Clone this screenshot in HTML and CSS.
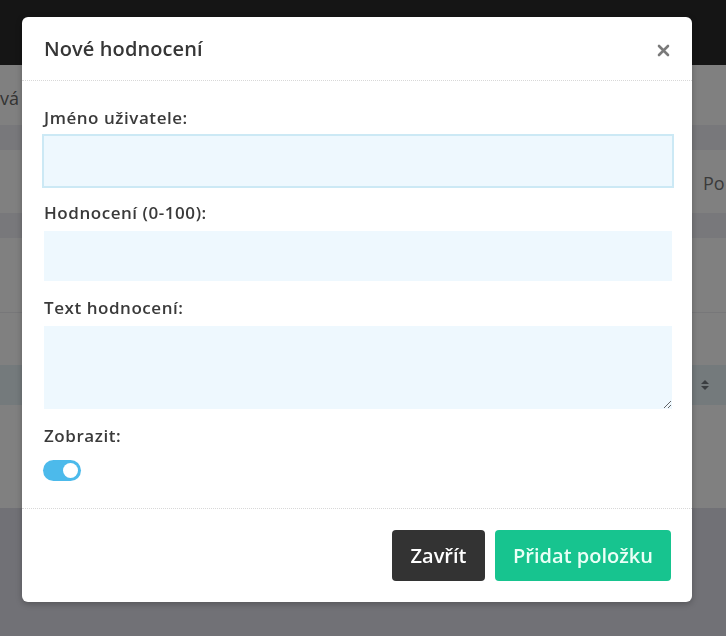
FILE: index.html
```html
<!DOCTYPE html>
<html lang="cs">
<head>
  <meta charset="UTF-8" />
  <meta name="viewport" content="width=device-width, initial-scale=1.0"/>
  <title>Nové hodnocení</title>
  <link rel="stylesheet" href="styles.css">
</head>
<body>

  <div class="page">
    <div class="topbar"></div>
    <div class="row row-title"><span class="left-text">vá</span></div>
    <div class="row band"></div>
    <div class="row row-tall"><span class="right-text">Po</span></div>
    <div class="row band"></div>
    <div class="row row-mid"></div>
    <div class="row row-mid2"></div>
    <div class="row band-teal">
      <svg class="sort" width="10" height="12" viewBox="0 0 10 12">
        <path d="M5 1 L9 5 H1 Z M5 11 L1 7 H9 Z" fill="#3a3d40"/>
      </svg>
    </div>
    <div class="row row-last"></div>
    <div class="bottom"></div>
  </div>

  <div class="modal-wrap">
    <div class="modal">
      <div class="modal-header">
        <h3>Nové hodnocení</h3>
        <button class="close" type="button">
          <svg width="13" height="13" viewBox="0 0 13 13">
            <path d="M2 2 L11 11 M11 2 L2 11" stroke="#7a7a7a" stroke-width="2.6" stroke-linecap="round"/>
          </svg>
        </button>
      </div>

      <div class="modal-body">
        <div class="form-group">
          <label>Jméno uživatele:</label>
          <input type="text" class="focused">
        </div>
        <div class="form-group">
          <label>Hodnocení (0-100):</label>
          <input type="text">
        </div>
        <div class="form-group">
          <label>Text hodnocení:</label>
          <textarea></textarea>
        </div>
        <div class="form-group last">
          <label>Zobrazit:</label>
          <span class="toggle"><span class="knob"></span></span>
        </div>
      </div>

      <div class="modal-footer">
        <button class="btn btn-dark" type="button">Zavřít</button>
        <button class="btn btn-green" type="button">Přidat položku</button>
      </div>
    </div>
  </div>

</body>
</html>
```

FILE: styles.css
```css
body {
  margin: 0;
  background: #808080;
  font-family: "Open Sans", Roboto, sans-serif;
  overflow: hidden;
}

.page {
  height: 636px;
  display: flex;
  flex-direction: column;
}

.topbar {
  height: 65px;
  background: #151515;
}

.row {
  position: relative;
  background: #808080;
}

.row-title {
  height: 60px;
}

.band {
  height: 25px;
  background: #78787b;
}

.row-tall {
  height: 63px;
}

.row-mid {
  height: 74px;
  border-bottom: 1px solid #777779;
}

.row-mid2 {
  height: 52px;
}

.band-teal {
  height: 40px;
  background: #747a7c;
}

.row-last {
  height: 103px;
}

.bottom {
  flex: 1;
  background: #717176;
}

.left-text {
  position: absolute;
  left: 0;
  top: 21px;
  font-size: 18px;
  color: #333;
}

.right-text {
  position: absolute;
  left: 703px;
  top: 21px;
  font-size: 18px;
  color: #3a3a3a;
}

.sort {
  position: absolute;
  left: 700px;
  top: 14px;
}

.modal-wrap {
  position: fixed;
  top: 0;
  left: 0;
  right: 0;
  bottom: 0;
  padding: 17px 34px 0 22px;
}

.modal {
  background: #fff;
  border-radius: 6px;
  box-shadow: 0 2px 6px rgba(0,0,0,0.25);
}

.modal-header {
  height: 63px;
  display: flex;
  align-items: center;
  justify-content: space-between;
  padding: 0 22px 0 22px;
  border-bottom: 1px dotted #d8d8d8;
}

.modal-header h3 {
  margin: 0;
  font-size: 20px;
  font-weight: 600;
  letter-spacing: 0.1px;
  color: #363636;
}

.close {
  border: none;
  background: none;
  padding: 0;
  margin-top: 4px;
  display: flex;
}

.modal-body {
  padding: 27px 21px 27px 21px;
}

.form-group {
  margin-bottom: 17px;
}

.form-group.last {
  margin-bottom: 0;
}

.form-group label {
  display: block;
  font-size: 17px;
  font-weight: 600;
  letter-spacing: 0.55px;
  line-height: 20px;
  color: #3a3a3a;
  margin: 0 0 8px 1px;
}

.form-group.last label {
  margin-bottom: 14px;
}

input,
textarea {
  display: block;
  box-sizing: border-box;
  width: 628px;
  margin-left: 1px;
  height: 50px;
  border: none;
  background: #eef8fe;
  outline: none;
  font-family: inherit;
  font-size: 16px;
}

input.focused {
  box-shadow: 0 0 0 2px #cce9f5;
}

textarea {
  height: 83px;
}

.toggle {
  display: block;
  width: 38px;
  height: 21px;
  border-radius: 11px;
  background: #4cbaeb;
  position: relative;
}

.knob {
  position: absolute;
  right: 3px;
  top: 3px;
  width: 15px;
  height: 15px;
  border-radius: 50%;
  background: #fff;
}

.modal-footer {
  display: flex;
  justify-content: flex-end;
  gap: 10px;
  padding: 21px;
  border-top: 1px dotted #d8d8d8;
}

.btn {
  height: 51px;
  border: none;
  border-radius: 4px;
  padding: 0;
  font-family: inherit;
  font-size: 20px;
  font-weight: 600;
  cursor: pointer;
}

.btn-dark {
  background: #333;
  color: #fff;
  width: 93px;
}

.btn-green {
  background: #17c48f;
  color: #eafff6;
  width: 176px;
}
```
